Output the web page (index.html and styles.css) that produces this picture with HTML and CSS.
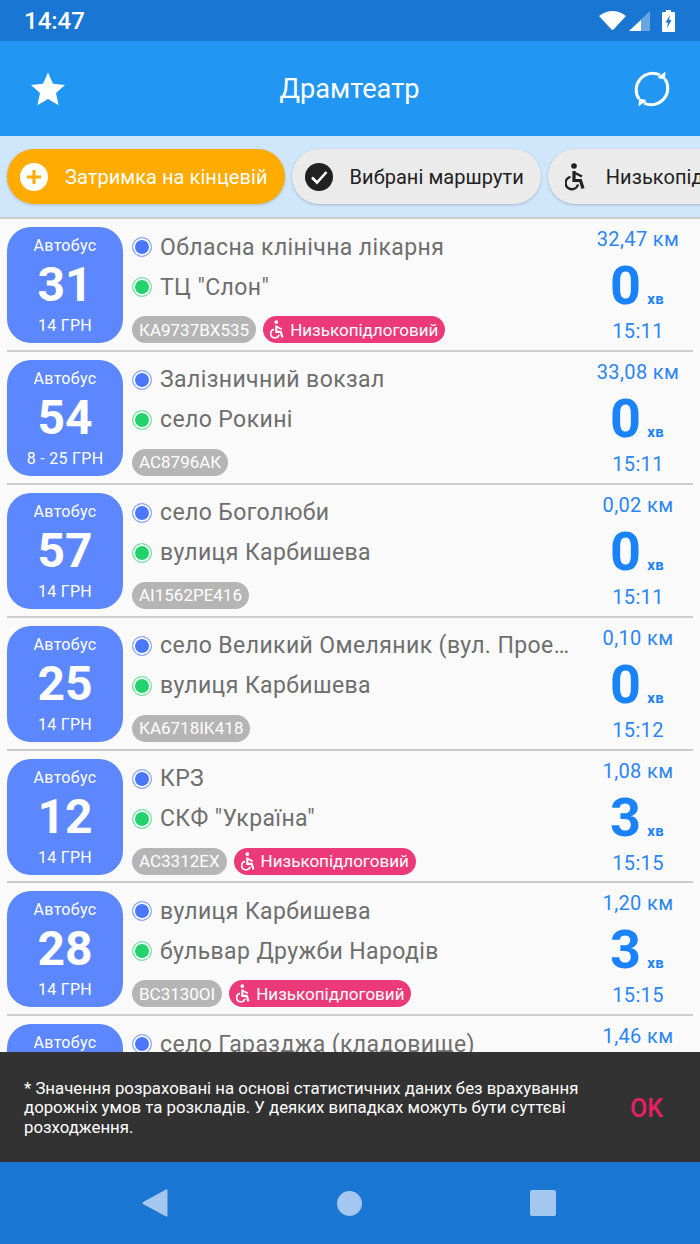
FILE: index.html
```html
<!DOCTYPE html>
<html lang="uk">
<head>
<meta charset="UTF-8" />
<title>Драмтеатр</title>
<link rel="stylesheet" href="styles.css">
</head>
<body>

<svg class="defs" width="0" height="0">
  <symbol id="wheel" viewBox="0 0 20 28">
    <circle cx="9" cy="3" r="2.800" fill="currentColor"/>
    <path d="M9 8v9.500h6.500l2.500 8" fill="none" stroke="currentColor" stroke-width="3.200"/>
    <path d="M9 9.500l8 4" fill="none" stroke="currentColor" stroke-width="2.400"/>
    <path d="M5.500 13.800A6.300 6.300 0 1 0 13 21.500" fill="none" stroke="currentColor" stroke-width="2.400"/>
  </symbol>
</svg>

<div class="screen">
  <div class="status">
    <span class="clock">14:47</span>
    <div class="status-icons">
      <svg width="27" height="19" viewBox="0 0 27 19"><path d="M0 5Q13.500-5 27 5L14.500 18.500a1.500 1.500 0 0 1-2 0z" fill="#fff"/></svg>
      <svg class="signal" width="21" height="20" viewBox="0 0 21 20"><path d="M21 0v20H0z" fill="#fff" opacity=".35"/><path d="M12 9v11H0z" fill="#fff"/></svg>
      <svg class="battery" width="13" height="22" viewBox="0 0 13 22"><path d="M4 0h5v2h3a1 1 0 0 1 1 1v18a1 1 0 0 1-1 1H1a1 1 0 0 1-1-1V3a1 1 0 0 1 1-1h3z" fill="#fff"/><path d="M8 5 3.500 12.500h2.500L5 18l4.500-8H7z" fill="#1976d2"/></svg>
    </div>
  </div>

  <div class="appbar">
    <svg width="36" height="36" viewBox="0 0 36 36"><path d="M18 1.500l5 11.300 12 1.200-9 8.100 2.600 12.100L18 27.900 7.400 34.200 10 22.100 1 14l12-1.200z" fill="#fff"/></svg>
    <span class="appbar-title">Драмтеатр</span>
    <svg width="38" height="38" viewBox="0 0 38 38" fill="none" stroke="#fff" stroke-width="3"><path d="M6 29A16.500 16.500 0 0 1 27 5"/><path d="M32 9A16.500 16.500 0 0 1 11 33"/><path d="M32 2.500 31.500 9 25 7.500z" fill="#fff" stroke-width="1"/><path d="M6 35.500 6.500 29 13 30.500z" fill="#fff" stroke-width="1"/></svg>
  </div>

  <div class="chips">
    <div class="chip chip-active">
      <svg width="28" height="28" viewBox="0 0 28 28"><circle cx="14" cy="14" r="14" fill="#fff"/><path d="M14 7v14M7 14h14" stroke="#ffab00" stroke-width="3"/></svg>
      <span>Затримка на кінцевій</span>
    </div>
    <div class="chip">
      <svg width="28" height="28" viewBox="0 0 28 28"><circle cx="14" cy="14" r="14" fill="#212121"/><path d="M7 14.500l5 5 9.500-10.500" fill="none" stroke="#fff" stroke-width="2.600"/></svg>
      <span>Вибрані маршрути</span>
    </div>
    <div class="chip chip-low">
      <svg class="chip-wheel" width="20" height="28"><use href="#wheel"/></svg>
      <span>Низькопідлоговий</span>
    </div>
  </div>

  <div class="list">
    <div class="row">
      <div class="badge"><span class="badge-type">Автобус</span><span class="badge-num">31</span><span class="badge-price">14 ГРН</span></div>
      <div class="info">
        <div class="stop"><i class="dot dot-blue"></i><span>Обласна клінічна лікарня</span></div>
        <div class="stop"><i class="dot dot-green"></i><span>ТЦ "Слон"</span></div>
        <div class="tags"><span class="tag">КА9737ВХ535</span><span class="tag tag-low"><svg width="14" height="19"><use href="#wheel"/></svg>Низькопідлоговий</span></div>
      </div>
      <div class="times"><span class="dist">32,47 км</span><div class="wait"><b>0</b><small>хв</small></div><span class="arrive">15:11</span></div>
    </div>

    <div class="row">
      <div class="badge"><span class="badge-type">Автобус</span><span class="badge-num">54</span><span class="badge-price">8 - 25 ГРН</span></div>
      <div class="info">
        <div class="stop"><i class="dot dot-blue"></i><span>Залізничний вокзал</span></div>
        <div class="stop"><i class="dot dot-green"></i><span>село Рокині</span></div>
        <div class="tags"><span class="tag">АС8796АК</span></div>
      </div>
      <div class="times"><span class="dist">33,08 км</span><div class="wait"><b>0</b><small>хв</small></div><span class="arrive">15:11</span></div>
    </div>

    <div class="row">
      <div class="badge"><span class="badge-type">Автобус</span><span class="badge-num">57</span><span class="badge-price">14 ГРН</span></div>
      <div class="info">
        <div class="stop"><i class="dot dot-blue"></i><span>село Боголюби</span></div>
        <div class="stop"><i class="dot dot-green"></i><span>вулиця Карбишева</span></div>
        <div class="tags"><span class="tag">АІ1562РЕ416</span></div>
      </div>
      <div class="times"><span class="dist">0,02 км</span><div class="wait"><b>0</b><small>хв</small></div><span class="arrive">15:11</span></div>
    </div>

    <div class="row">
      <div class="badge"><span class="badge-type">Автобус</span><span class="badge-num">25</span><span class="badge-price">14 ГРН</span></div>
      <div class="info">
        <div class="stop"><i class="dot dot-blue"></i><span>село Великий Омеляник (вул. Проектна)</span></div>
        <div class="stop"><i class="dot dot-green"></i><span>вулиця Карбишева</span></div>
        <div class="tags"><span class="tag">КА6718ІК418</span></div>
      </div>
      <div class="times"><span class="dist">0,10 км</span><div class="wait"><b>0</b><small>хв</small></div><span class="arrive">15:12</span></div>
    </div>

    <div class="row">
      <div class="badge"><span class="badge-type">Автобус</span><span class="badge-num">12</span><span class="badge-price">14 ГРН</span></div>
      <div class="info">
        <div class="stop"><i class="dot dot-blue"></i><span>КРЗ</span></div>
        <div class="stop"><i class="dot dot-green"></i><span>СКФ "Україна"</span></div>
        <div class="tags"><span class="tag">АС3312ЕХ</span><span class="tag tag-low"><svg width="14" height="19"><use href="#wheel"/></svg>Низькопідлоговий</span></div>
      </div>
      <div class="times"><span class="dist">1,08 км</span><div class="wait"><b>3</b><small>хв</small></div><span class="arrive">15:15</span></div>
    </div>

    <div class="row">
      <div class="badge"><span class="badge-type">Автобус</span><span class="badge-num">28</span><span class="badge-price">14 ГРН</span></div>
      <div class="info">
        <div class="stop"><i class="dot dot-blue"></i><span>вулиця Карбишева</span></div>
        <div class="stop"><i class="dot dot-green"></i><span>бульвар Дружби Народів</span></div>
        <div class="tags"><span class="tag">ВС3130ОІ</span><span class="tag tag-low"><svg width="14" height="19"><use href="#wheel"/></svg>Низькопідлоговий</span></div>
      </div>
      <div class="times"><span class="dist">1,20 км</span><div class="wait"><b>3</b><small>хв</small></div><span class="arrive">15:15</span></div>
    </div>

    <div class="row">
      <div class="badge"><span class="badge-type">Автобус</span></div>
      <div class="info">
        <div class="stop"><i class="dot dot-blue"></i><span>село Гаразджа (кладовище)</span></div>
      </div>
      <div class="times"><span class="dist">1,46 км</span></div>
    </div>
  </div>

  <div class="snackbar">
    <p>* Значення розраховані на основі статистичних даних без врахування дорожніх умов та розкладів. У деяких випадках можуть бути суттєві розходження.</p>
    <span class="snackbar-ok">OK</span>
  </div>

  <div class="navbar">
    <svg width="26" height="30" viewBox="0 0 26 30"><path d="M24 1.500a1 1 0 0 1 1.500 1v25a1 1 0 0 1-1.500 1L1 16a1.500 1.500 0 0 1 0-2z" fill="#a3c7ee"/></svg>
    <svg width="25" height="25" viewBox="0 0 26 26"><circle cx="13" cy="13" r="13" fill="#a3c7ee"/></svg>
    <svg width="26" height="26" viewBox="0 0 26 26"><rect width="26" height="26" rx="2" fill="#a3c7ee"/></svg>
  </div>
</div>

</body>
</html>
```

FILE: styles.css
```css
* {
  box-sizing: border-box;
}
body {
  margin: 0;
  font-family: Roboto, sans-serif;
  background: #fafafa;
}
.defs {
  position: absolute;
}
.screen {
  display: flex;
  flex-direction: column;
  width: 700px;
  height: 1244px;
  overflow: hidden;
}
.status {
  display: flex;
  justify-content: space-between;
  align-items: center;
  height: 41px;
  flex: none;
  padding: 0 25px 0 24px;
  background: #1976d2;
  color: white;
}
.clock {
  font-size: 24px;
  font-weight: 500;
}
.status-icons {
  display: flex;
  align-items: center;
}
.signal {
  margin-left: 3px;
}
.battery {
  margin-left: 12px;
}
.appbar {
  display: flex;
  justify-content: space-between;
  align-items: center;
  height: 95px;
  flex: none;
  padding: 0 29px 0 30px;
  background: #2196f3;
  color: white;
}
.appbar-title {
  font-size: 27.2px;
}
.chips {
  display: flex;
  gap: 7px;
  height: 83px;
  flex: none;
  padding: 13px 0 0 7px;
  background: #d0e6fb;
  border-bottom: 2px solid #c8ccd0;
  overflow: hidden;
}
.chip {
  display: flex;
  align-items: center;
  gap: 17px;
  height: 55px;
  flex: none;
  padding: 0 17px 0 13px;
  border-radius: 28px;
  background: #ebebeb;
  box-shadow: 0 1px 3px rgba(0, 0, 0, 0.2);
  font-size: 20px;
  letter-spacing: 0.06px;
  color: #212121;
  white-space: nowrap;
}
.chip-active {
  background: #ffab00;
  color: white;
}
.chip-low {
  gap: 21px;
  padding-left: 17px;
}
.chip-wheel {
  color: #212121;
}
.list {
  flex: 1;
  min-height: 0;
  overflow: hidden;
}
.row {
  display: flex;
  height: 132.9px;
  margin: 0 7px;
  padding-top: 8px;
  border-bottom: 2px solid #ccc;
}
.badge {
  display: flex;
  flex-direction: column;
  align-items: center;
  width: 116px;
  height: 116px;
  flex: none;
  padding-top: 9px;
  border-radius: 24px;
  background: #5c87ff;
  color: white;
}
.badge-type,
.badge-price {
  font-size: 16px;
  letter-spacing: 0.3px;
  line-height: 20px;
}
.badge-num {
  font-size: 48px;
  font-weight: 700;
  line-height: 58px;
}
.badge-price {
  margin-top: 2px;
}
.info {
  width: 460px;
  flex: none;
  padding: 0 11px 0 9px;
}
.stop {
  display: flex;
  align-items: center;
  gap: 8px;
  height: 40px;
  font-size: 23px;
  letter-spacing: 0.4px;
  color: #6e6e6e;
}
.stop span {
  overflow: hidden;
  text-overflow: ellipsis;
  white-space: nowrap;
}
.dot {
  width: 20px;
  height: 20px;
  flex: none;
  border: 1px solid;
  border-radius: 50%;
  box-shadow: inset 0 0 0 2px white;
}
.dot-blue {
  border-color: #8ea8ff;
  background: #4a77fb;
}
.dot-green {
  border-color: #7be3a6;
  background: #22d36c;
}
.tags {
  display: flex;
  gap: 7px;
  margin-top: 9px;
}
.tag {
  display: flex;
  align-items: center;
  height: 27px;
  padding: 0 7px;
  border-radius: 14px;
  background: #b5b5b5;
  color: white;
  font-size: 17px;
  white-space: nowrap;
}
.tag-low {
  gap: 6px;
  background: #ec3a78;
}
.times {
  display: flex;
  flex: 1;
  flex-direction: column;
  align-items: center;
  color: #2a85f5;
  font-size: 20px;
  letter-spacing: 0.38px;
}
.dist,
.arrive {
  line-height: 24px;
  white-space: nowrap;
}
.wait {
  display: flex;
  align-items: baseline;
  height: 68px;
  margin-left: -2px;
  color: #1a82fb;
}
.wait b {
  font-size: 54px;
  line-height: 70px;
}
.wait small {
  margin-left: 6px;
  font-size: 15px;
  font-weight: 700;
}
.snackbar {
  display: flex;
  align-items: center;
  justify-content: space-between;
  height: 110px;
  flex: none;
  padding: 2px 37px 0 24px;
  background: #323232;
  color: white;
}
.snackbar p {
  width: 570px;
  margin: 0;
  font-size: 16.8px;
  line-height: 19.5px;
}
.snackbar-ok {
  font-size: 25px;
  font-weight: 500;
  color: #e91e63;
}
.navbar {
  display: flex;
  align-items: center;
  justify-content: space-between;
  height: 82px;
  flex: none;
  padding: 0 144px 0 142px;
  background: #1976d2;
}
```
